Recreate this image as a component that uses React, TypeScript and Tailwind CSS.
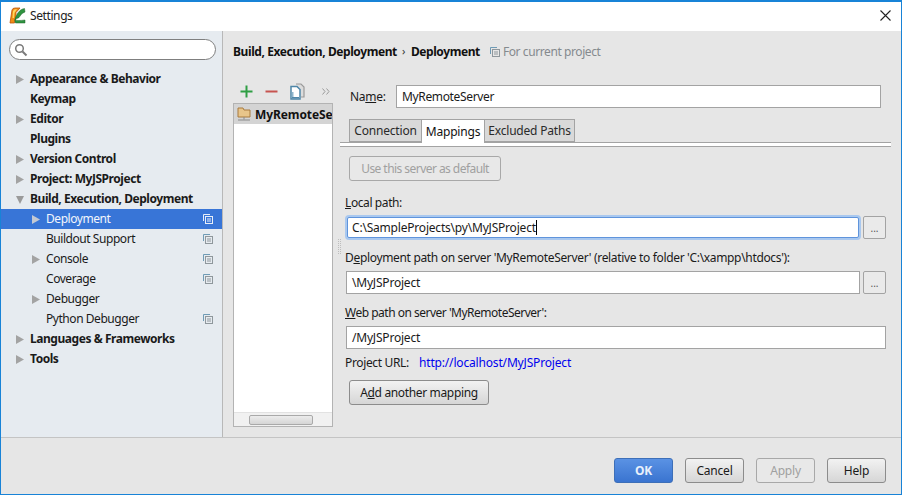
import React from "react";

const font = { fontFamily: '"Noto Sans", "Open Sans", sans-serif' };

function Arrow({ down, light }: { down?: boolean; light?: boolean }) {
  return (
    <svg width="9" height="9" viewBox="0 0 9 9" className="block">
      {down ? (
        <polygon points="0,1 8,1 4,9" fill="#9a9a9a" />
      ) : (
        <polygon points="0,0 8,4.5 0,9" fill={light ? "#c3c9d3" : "#a3a3a3"} />
      )}
    </svg>
  );
}

function CopyIcon({ light, color }: { light?: boolean; color?: string }) {
  const c = light ? "#e8eef8" : color || "#6f9bb5";
  const g = light ? "#e8eef8" : "#8f979c";
  return (
    <svg width="10" height="10" viewBox="0 0 10 10" className="block">
      <path d="M0.5 7V0.5H7" fill="none" stroke={c} />
      <rect x="2.5" y="2.5" width="7" height="7" fill="none" stroke={g} />
      <path d="M4 5h4M4 7h4" stroke={g} />
    </svg>
  );
}

type Item = { t: string; bold?: boolean; arrow?: "r" | "d"; sub?: boolean; sel?: boolean; copy?: boolean };
const items: Item[] = [
  { t: "Appearance & Behavior", bold: true, arrow: "r" },
  { t: "Keymap", bold: true },
  { t: "Editor", bold: true, arrow: "r" },
  { t: "Plugins", bold: true },
  { t: "Version Control", bold: true, arrow: "r" },
  { t: "Project: MyJSProject", bold: true, arrow: "r" },
  { t: "Build, Execution, Deployment", bold: true, arrow: "d" },
  { t: "Deployment", sub: true, arrow: "r", sel: true, copy: true },
  { t: "Buildout Support", sub: true, copy: true },
  { t: "Console", sub: true, arrow: "r", copy: true },
  { t: "Coverage", sub: true, copy: true },
  { t: "Debugger", sub: true, arrow: "r" },
  { t: "Python Debugger", sub: true, copy: true },
  { t: "Languages & Frameworks", bold: true, arrow: "r" },
  { t: "Tools", bold: true, arrow: "r" },
];

function TreeRow({ it }: { it: Item }) {
  return (
    <div
      className={`h-5 flex items-center pr-[9px] ${it.sub ? "pl-[31px]" : "pl-[15px]"} ${
        it.sel ? "bg-[#3875d7] text-[#f2f6fc]" : "text-[#1a1a1a]"
      }`}
    >
      <span className="w-[14px] shrink-0">{it.arrow && <Arrow down={it.arrow === "d"} light={it.sel} />}</span>
      <span className={`flex-1 whitespace-nowrap tracking-[-0.45px] ${it.bold ? "font-bold" : ""}`}>{it.t}</span>
      {it.copy && <CopyIcon light={it.sel} />}
    </div>
  );
}

function Btn({
  children,
  w,
  disabled,
  primary,
}: {
  children: React.ReactNode;
  w: string;
  disabled?: boolean;
  primary?: boolean;
}) {
  const cls = primary
    ? "bg-gradient-to-b from-[#5a92e4] to-[#3a74d0] border-[#3d6fb8] text-[#e8f0fb] font-bold"
    : disabled
    ? "bg-[#e8e8e8] border-[#a8a8a8] text-[#a0a0a0]"
    : "bg-gradient-to-b from-[#f2f2f2] to-[#d6d6d6] border-[#8c8c8c] text-[#1a1a1a]";
  return (
    <div className={`${w} h-[25px] shrink-0 flex items-center justify-center rounded-[3px] border ${cls}`}>{children}</div>
  );
}

function Field({
  value,
  caret,
  focus,
  className,
  tight,
}: {
  value: string;
  caret?: boolean;
  focus?: boolean;
  className: string;
  tight?: boolean;
}) {
  return (
    <div
      className={`bg-white flex items-center whitespace-nowrap ${
        focus
          ? "h-[21px] border border-[#5f94dc] shadow-[0_0_0_2px_#a9c8ef] rounded-[2px] pl-[4px]"
          : "h-[23px] border border-[#a3a3a3] pl-[5px]"
      } text-[#1a1a1a] ${tight ? "tracking-[-0.35px]" : "tracking-[-0.2px]"} ${className}`}
    >
      {value}
      {caret && <span className="inline-block w-px h-[15px] bg-black" />}
    </div>
  );
}

function Dots() {
  return (
    <div className="w-[23px] h-[23px] shrink-0 flex items-center justify-center rounded-[2px] border border-[#a3a3a3] bg-[#eaeaea] text-[#555] text-[10px] leading-none">
      ...
    </div>
  );
}

function Label({ before, u, after, className }: { before?: string; u: string; after: string; className: string }) {
  return (
    <div className={`h-[17px] leading-[17px] text-[#1a1a1a] whitespace-nowrap ${className}`}>
      {before}
      <span className="underline">{u}</span>
      {after}
    </div>
  );
}

export default function App() {
  return (
    <div
      style={font}
      className="w-[902px] h-[495px] flex flex-col bg-[#e6e6e6] border border-[#1883d7] border-t-2 text-[12px] overflow-hidden"
    >
      {/* title bar */}
      <div className="h-[29px] shrink-0 bg-white flex items-center pl-[8px] pr-[10px] pb-[2px]">
        <svg width="17" height="17" viewBox="0 0 17 17" className="block">
          <path d="M1 16 L3 3 Q3.5 1 6 1 L11 1 L7 5.5 L7 9 L5.5 16 Z" fill="#f08c14" stroke="#b9530a" strokeWidth="0.8" />
          <path d="M4 4 Q5 2 8 2 L5.5 6 L5 11 L3.5 11 Z" fill="#ffd760" />
          <path d="M15.5 1.5 L16 5 Q12.5 6 11.5 8.5 Q10 11.5 7.5 11.5 L6.5 13 Q8 14 16 13 L16 16 L6.5 16 Q4.8 13 7 9.5 Q9 5 11 3.5 Q13 1.8 15.5 1.5 Z" fill="#2f9440" stroke="#1c6128" strokeWidth="0.5" />
        </svg>
        <span className="ml-[4px] text-[#222] tracking-[-0.4px]">Settings</span>
        <svg width="11" height="11" viewBox="0 0 11 11" className="block ml-auto">
          <path d="M0.5 0.5L10.5 10.5M10.5 0.5L0.5 10.5" stroke="#222" strokeWidth="1.1" />
        </svg>
      </div>

      {/* body */}
      <div className="flex-1 flex min-h-0">
        <div className="w-[221px] shrink-0 bg-[#e6ebf0] flex flex-col">
          <div className="pt-[8px] pl-[8px]">
            <div className="w-[207px] h-[21px] rounded-full bg-white border border-[#7f7f7f] flex items-center pl-[4px]">
              <svg width="14" height="14" viewBox="0 0 14 14" className="block">
                <circle cx="5.5" cy="5.5" r="3.8" fill="none" stroke="#7a7a7a" strokeWidth="1.5" />
                <path d="M8.5 8.5L12.5 12.5" stroke="#7a7a7a" strokeWidth="2" />
              </svg>
            </div>
          </div>
          <div className="mt-[9px]">
            {items.map((it) => (
              <TreeRow key={it.t} it={it} />
            ))}
          </div>
        </div>
        <div className="w-px bg-[#b8b8b8] shrink-0" />

        <div className="flex-1 flex flex-col min-w-0 pl-[10px]">
          <div className="h-[21px] mt-[10px] flex items-center whitespace-nowrap text-[#111] tracking-[-0.41px]">
            <span className="font-bold">Build, Execution, Deployment</span>
            <span className="ml-[5px] mr-[6px] text-[#333] text-[11px]">›</span>
            <span className="font-bold">Deployment</span>
            <span className="ml-[10px]"><CopyIcon /></span>
            <span className="ml-[3px] text-[#858a8e]">For current project</span>
          </div>

          <div className="flex mt-[17px]">
            {/* server list */}
            <div className="w-[100px] shrink-0">
              <div className="h-[24px] flex items-center pl-[7px]">
                <svg width="13" height="13" viewBox="0 0 13 13" className="block">
                  <path d="M6.5 0.5v12M0.5 6.5h12" stroke="#2f9e44" strokeWidth="2" />
                </svg>
                <svg width="13" height="13" viewBox="0 0 13 13" className="block ml-[12px]">
                  <path d="M0.5 6.5h12" stroke="#c75450" strokeWidth="2" />
                </svg>
                <svg width="15" height="17" viewBox="0 0 15 17" className="block ml-[12px]">
                  <path d="M6 1h5l3 3v10h-3" fill="#dcdcdc" stroke="#9a9a9a" strokeWidth="1.2" />
                  <path d="M1 3.5h6l3 3V16H1z" fill="#fff" stroke="#4f86a8" strokeWidth="1.5" />
                  <path d="M2 9h1.5v6H2z" fill="#8fb5cc" />
                  <path d="M2 14h7v1.5H2z" fill="#4f86a8" />
                </svg>
                <svg width="8" height="7" viewBox="0 0 8 7" className="block ml-[17px]">
                  <path d="M0.5 0.5L3 3.5L0.5 6.5M4.5 0.5L7 3.5L4.5 6.5" fill="none" stroke="#9a9a9a" />
                </svg>
              </div>
              <div className="h-[324px] border border-[#b3b3b3] bg-white flex flex-col">
                <div className="h-[20px] bg-[#d4d4d4] flex items-center pl-[3px] overflow-hidden whitespace-nowrap">
                  <svg width="14" height="15" viewBox="0 0 14 15" className="block shrink-0">
                    <path d="M1 1h5l1 2h6v7H1z" fill="#e8c58a" stroke="#a87b3e" />
                    <path d="M7 10v2.5M1 13h12" stroke="#8a8a8a" />
                  </svg>
                  <span className="ml-[4px] pt-[1px] font-bold text-[#111] tracking-[-0.1px]">MyRemoteServer</span>
                </div>
                <div className="flex-1" />
                <div className="h-[14px] bg-[#f1f1f1] border-t border-[#e2e2e2] flex items-center pl-[15px]">
                  <div className="w-[64px] h-[10px] rounded-[2px] border border-[#a9a9a9] bg-gradient-to-b from-[#ececec] to-[#d5d5d5]" />
                </div>
              </div>
            </div>

            {/* splitter */}
            <div className="w-[12px] shrink-0 flex justify-center pt-[160px]">
              <div className="w-[3px] h-[15px] border-x border-dotted border-[#bdbdbd]" />
            </div>

            {/* right form */}
            <div className="flex-1 min-w-0 pr-[15px]">
              <div className="flex items-center h-[23px] mt-[6px] pl-[5px]">
                <span className="w-[46px] text-[#1a1a1a] tracking-[-0.3px]">Na<span className="underline">m</span>e:</span>
                <Field value="MyRemoteServer" tight className="w-[485px]" />
              </div>

              <div className="flex mt-[11px] -ml-[5px] w-[551px] h-[24px] pl-[9px] border-b border-[#a3a3a3] items-stretch text-[#2a2a2a] tracking-[-0.2px]">
                <div className="w-[73px] pt-[1px] flex items-center justify-center border border-[#a3a3a3] bg-[#d9d9d9]">Connection</div>
                <div className="w-[62px] pt-[1px] flex items-center justify-center border-t border-[#a3a3a3] bg-white text-[#111] -mb-px">Mappings</div>
                <div className="w-[91px] pt-[1px] flex items-center justify-center border border-[#a3a3a3] bg-[#d9d9d9]">Excluded Paths</div>
              </div>
              <div className="h-[4px] border-b border-[#a3a3a3] bg-white -ml-[5px] w-[551px]" />

              <div className="mt-[9px] ml-[4px] tracking-[-0.55px]">
                <Btn w="w-[152px]" disabled>Use this server as default</Btn>
              </div>

              <Label u="L" after="ocal path:" className="mt-[13px] tracking-[-0.4px]" />
              <div className="flex items-center mt-[5px] pl-[2px]">
                <Field value="C:\SampleProjects\py\MyJSProject" caret focus className="w-[512px]" />
                <div className="ml-[4px]"><Dots /></div>
              </div>

              <Label before="D" u="e" after="ployment path on server 'MyRemoteServer' (relative to folder 'C:\xampp\htdocs'):" className="mt-[10px] tracking-[-0.33px]" />
              <div className="flex items-center mt-[5px] pl-[1px]">
                <Field value="\MyJSProject" className="w-[514px]" />
                <div className="ml-[3px]"><Dots /></div>
              </div>

              <Label u="W" after="eb path on server 'MyRemoteServer':" className="mt-[10px] tracking-[-0.5px]" />
              <div className="mt-[5px] pl-[1px]">
                <Field value="/MyJSProject" className="w-[540px]" />
              </div>

              <div className="h-[17px] leading-[17px] mt-[5px] flex whitespace-nowrap">
                <span className="text-[#1a1a1a] w-[74px] tracking-[-0.35px]">Project URL:</span>
                <span className="text-[#0000ee] tracking-[-0.17px]">http://localhost/MyJSProject</span>
              </div>

              <div className="mt-[9px] ml-[4px]">
                <Btn w="w-[140px]">
                  <span className="tracking-[-0.35px]">A<span className="underline">d</span>d another mapping</span>
                </Btn>
              </div>
            </div>
          </div>
        </div>
      </div>

      {/* footer */}
      <div className="h-[57px] shrink-0 border-t border-[#c4c4c4] flex items-start justify-end pt-[20px] pr-[15px] gap-[12px] bg-[#e6e6e6] tracking-[-0.2px]">
        <Btn w="w-[59px]" primary>OK</Btn>
        <Btn w="w-[59px]">Cancel</Btn>
        <Btn w="w-[59px]" disabled>Apply</Btn>
        <Btn w="w-[59px]">Help</Btn>
      </div>
    </div>
  );
}
